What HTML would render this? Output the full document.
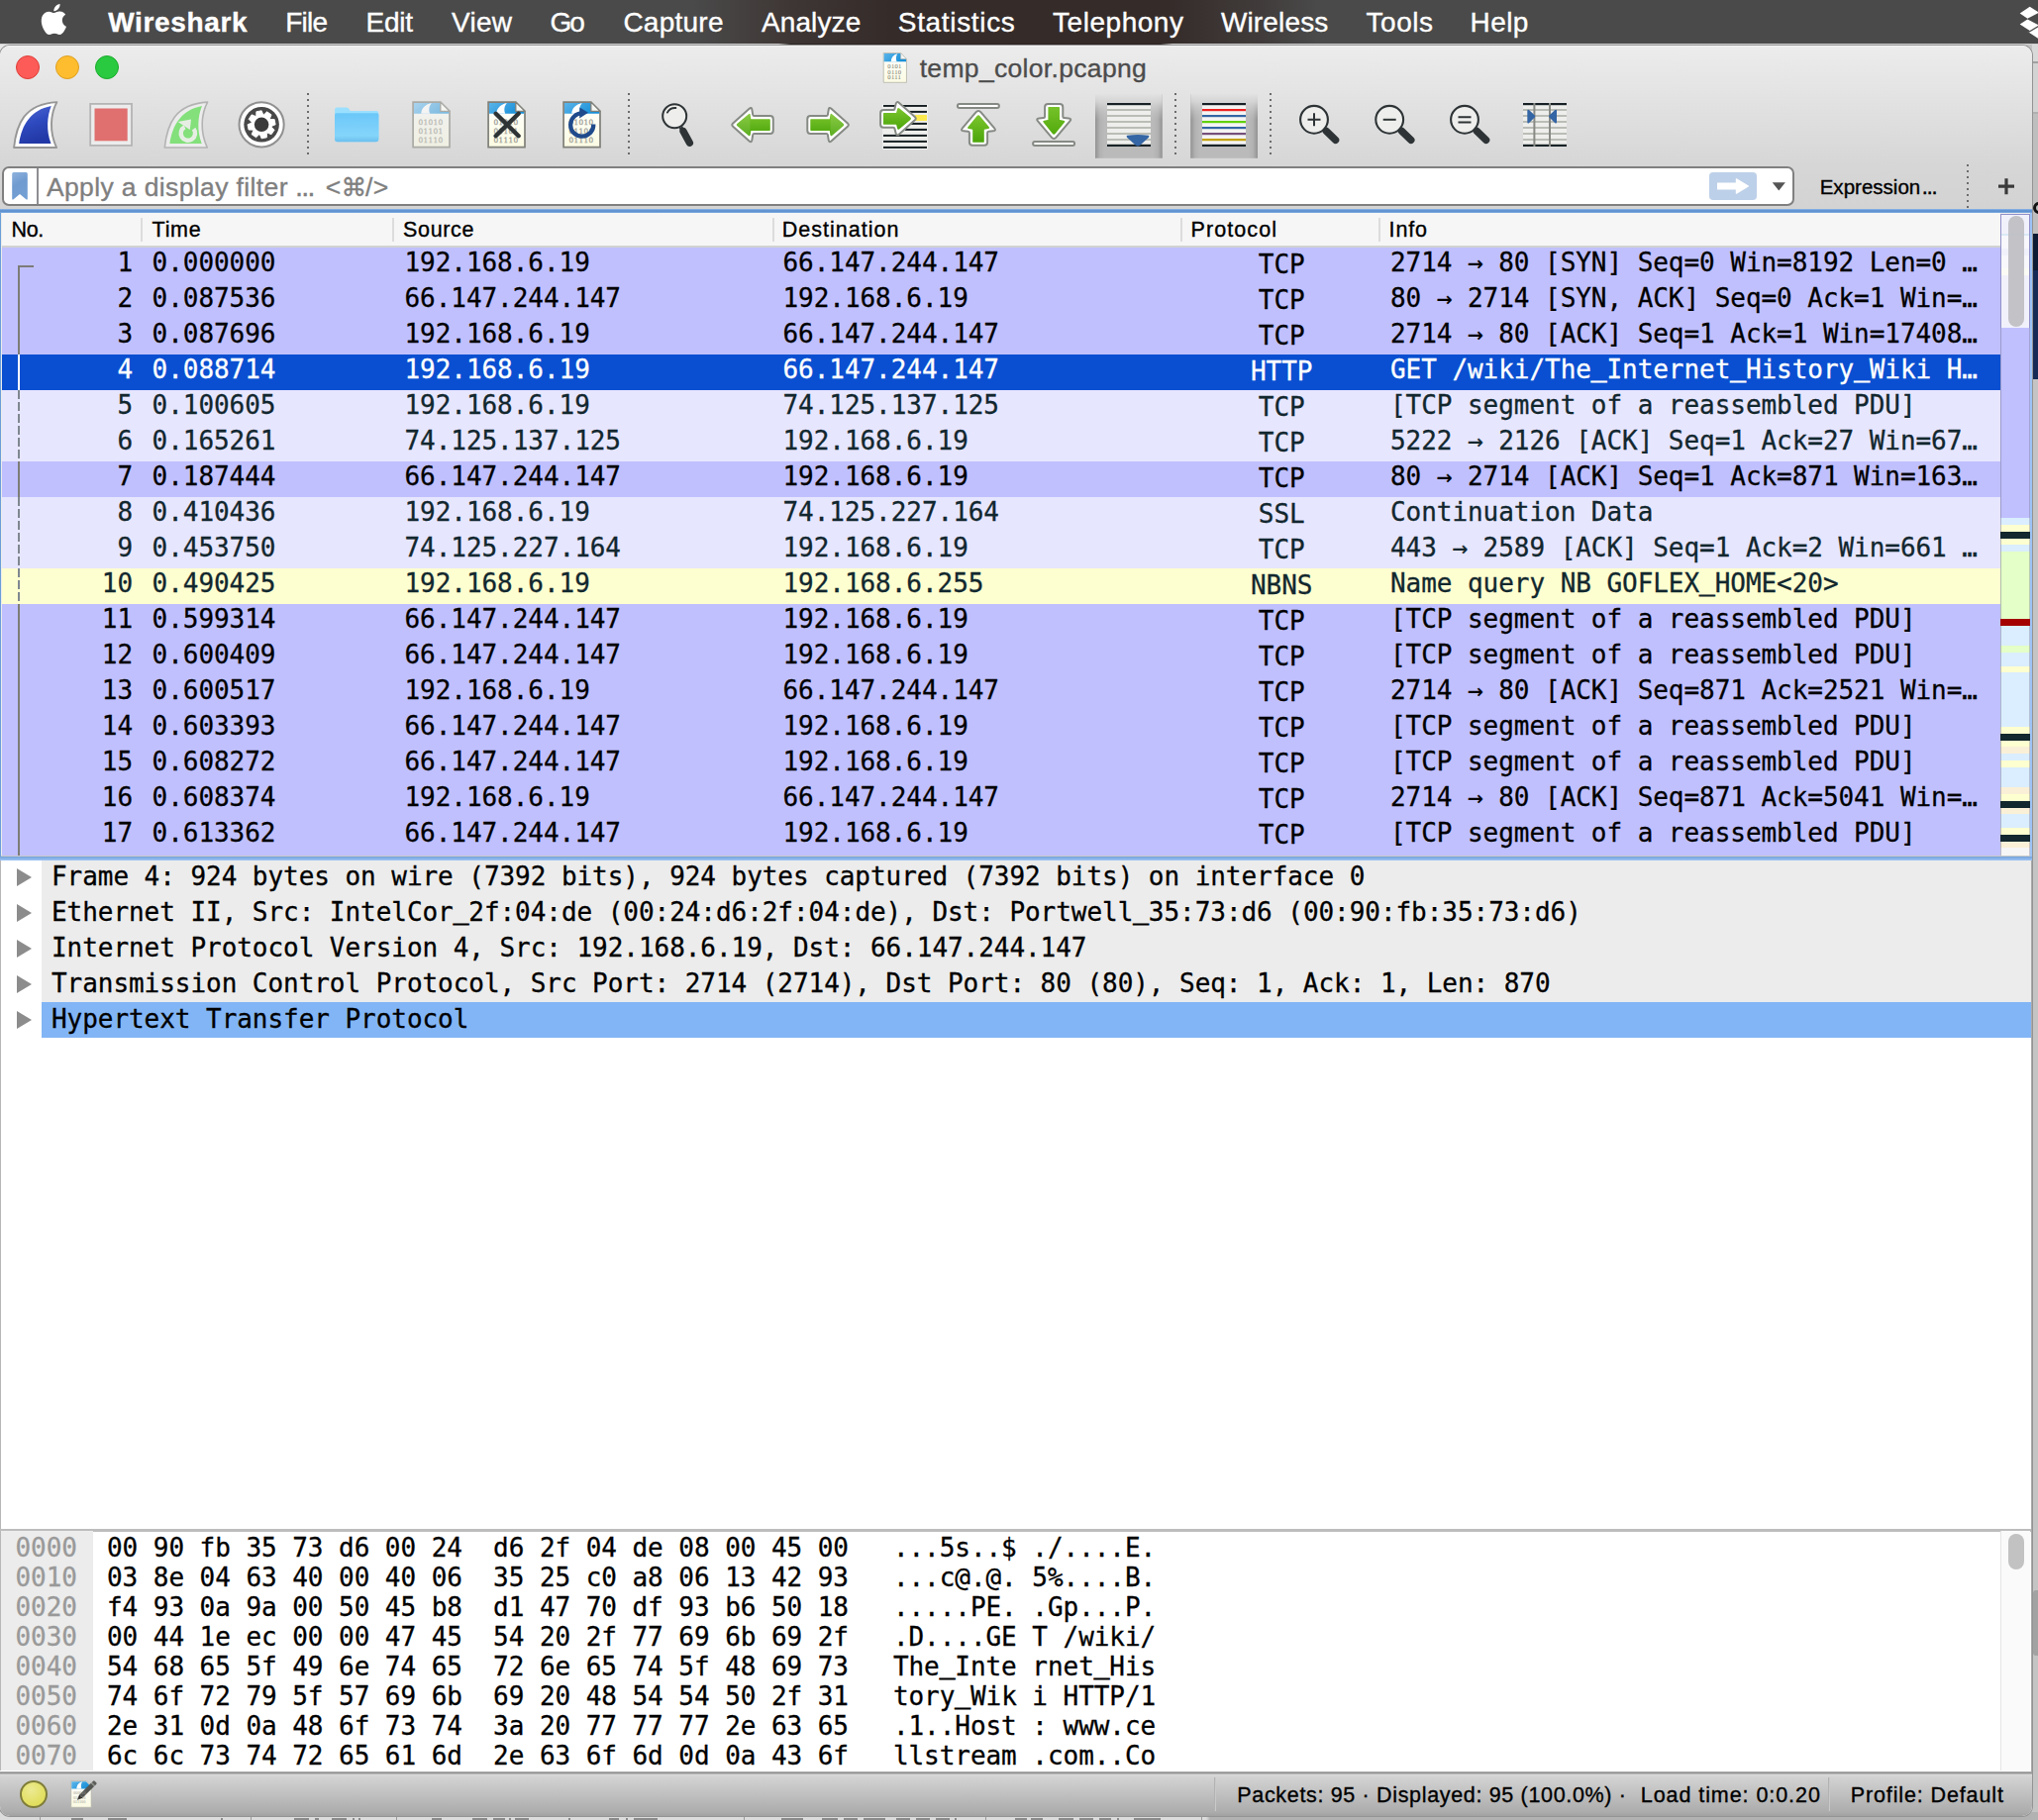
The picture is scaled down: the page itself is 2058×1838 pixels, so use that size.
<!DOCTYPE html>
<html lang="en"><head><meta charset="utf-8"><title>temp_color.pcapng</title>
<style>

html,body{margin:0;padding:0;}
body{width:2058px;height:1838px;overflow:hidden;position:relative;background:#c2c2c2;font-family:"Liberation Sans","DejaVu Sans",sans-serif;}
div,span{box-sizing:border-box;}
.a{position:absolute;}
.ov{position:absolute;left:0;top:0;pointer-events:none;z-index:3;}
.ov text{font-family:"Liberation Sans","DejaVu Sans",sans-serif;white-space:pre;stroke-width:0.35px;paint-order:stroke;}
.m{font-family:"DejaVu Sans Mono","Liberation Mono",monospace;font-size:26px;white-space:pre;letter-spacing:-0.05px;-webkit-text-stroke:0.3px currentColor;}
#menubar{left:0;top:0;width:2058px;height:43.5px;background:linear-gradient(90deg,#4a4a4a 0,#4a4a4a 700px,#3e3634 800px,#352c2a 900px,#352c2a 1180px,#403b3a 1270px,#4a4a4a 1330px,#4a4a4a 100%);}
#win{left:0;top:46px;width:2052px;height:1788px;border-radius:10px 10px 10px 10px;background:#fff;overflow:hidden;box-shadow:0 0 0 1px #949494;}
#tb{left:0;top:0;width:2052px;height:166px;background:linear-gradient(180deg,#f7f7f7 0,#ececec 1.5px,#d6d6d6 122px,#d3d3d3 166px);}
.row{position:absolute;left:2px;width:2018px;height:36px;}
.row span{position:absolute;top:-3px;line-height:36px;}
.p{background:#c0c0ff;color:#000;}
.l{background:#e7e6ff;color:#12272e;}
.y{background:#feffd0;color:#12272e;}
.s{background:#0a4fd1;color:#fff;}
.drow{position:absolute;left:42px;width:2009px;height:36px;background:#ececec;}
.drow span{position:absolute;left:10px;top:-1.3px;line-height:36px;color:#000;}
.tri{position:absolute;left:17px;width:0;height:0;border-left:15px solid #8c8c8c;border-top:9px solid transparent;border-bottom:9px solid transparent;}
.m i{font-style:normal;position:relative;top:-2.1px;-webkit-text-stroke:1px currentColor;}
.brow{position:absolute;left:0;height:30px;}
.brow span{position:absolute;top:1.1px;line-height:30px;}

</style></head>
<body>

<div class="a" style="left:2050px;top:44px;width:8px;height:1794px;background:#c4c4c4;"></div>
<div class="a" style="left:2052px;top:44px;width:6px;height:18px;background:#d9d9d9;"></div>
<div class="a" style="left:2052px;top:62px;width:6px;height:51px;background:#d3d3d3;border-top:2px solid #a0a0a0;"></div>
<div class="a" style="left:2052px;top:113px;width:6px;height:123px;background:#bebebe;border-top:2px solid #b0b0b0;"></div>
<div class="a" style="left:2053px;top:236px;width:5px;height:37px;background:#0c1a33;"></div>
<div class="a" style="left:2053px;top:273px;width:5px;height:110px;background:#152b55;"></div>
<div class="a" style="left:2053px;top:1606px;width:5px;height:66px;background:#a2a2a2;border-radius:3px 0 0 3px;"></div>
<div class="a" style="left:0;top:1830px;width:2058px;height:8px;background:linear-gradient(90deg,#dcdcdc 0,#dcdcdc 1218px,#b2b2b2 1222px,#b2b2b2 100%);"></div>
<div class="a" style="left:72px;top:1836px;width:12px;height:3px;background:#3a3a3a;opacity:0.5;"></div><div class="a" style="left:109px;top:1836px;width:19px;height:3px;background:#3a3a3a;opacity:0.5;"></div><div class="a" style="left:223px;top:1836px;width:2px;height:3px;background:#3a3a3a;opacity:0.5;"></div><div class="a" style="left:297px;top:1836px;width:15px;height:3px;background:#3a3a3a;opacity:0.5;"></div><div class="a" style="left:318px;top:1836px;width:4px;height:3px;background:#3a3a3a;opacity:0.5;"></div><div class="a" style="left:335px;top:1836px;width:15px;height:3px;background:#3a3a3a;opacity:0.5;"></div><div class="a" style="left:356px;top:1836px;width:2px;height:3px;background:#3a3a3a;opacity:0.5;"></div><div class="a" style="left:362px;top:1836px;width:2px;height:3px;background:#3a3a3a;opacity:0.5;"></div><div class="a" style="left:436px;top:1836px;width:10px;height:3px;background:#3a3a3a;opacity:0.5;"></div><div class="a" style="left:477px;top:1836px;width:15px;height:3px;background:#3a3a3a;opacity:0.5;"></div><div class="a" style="left:498px;top:1836px;width:12px;height:3px;background:#3a3a3a;opacity:0.5;"></div><div class="a" style="left:514px;top:1836px;width:2px;height:3px;background:#3a3a3a;opacity:0.5;"></div><div class="a" style="left:520px;top:1836px;width:14px;height:3px;background:#3a3a3a;opacity:0.5;"></div><div class="a" style="left:574px;top:1836px;width:2px;height:3px;background:#3a3a3a;opacity:0.5;"></div><div class="a" style="left:615px;top:1836px;width:10px;height:3px;background:#3a3a3a;opacity:0.5;"></div><div class="a" style="left:632px;top:1836px;width:2px;height:3px;background:#3a3a3a;opacity:0.5;"></div><div class="a" style="left:640px;top:1836px;width:24px;height:3px;background:#3a3a3a;opacity:0.5;"></div><div class="a" style="left:789px;top:1836px;width:22px;height:3px;background:#3a3a3a;opacity:0.5;"></div><div class="a" style="left:830px;top:1836px;width:16px;height:3px;background:#3a3a3a;opacity:0.5;"></div><div class="a" style="left:852px;top:1836px;width:14px;height:3px;background:#3a3a3a;opacity:0.5;"></div><div class="a" style="left:872px;top:1836px;width:22px;height:3px;background:#3a3a3a;opacity:0.5;"></div><div class="a" style="left:905px;top:1836px;width:14px;height:3px;background:#3a3a3a;opacity:0.5;"></div><div class="a" style="left:925px;top:1836px;width:14px;height:3px;background:#3a3a3a;opacity:0.5;"></div><div class="a" style="left:945px;top:1836px;width:14px;height:3px;background:#3a3a3a;opacity:0.5;"></div><div class="a" style="left:964px;top:1836px;width:2px;height:3px;background:#3a3a3a;opacity:0.5;"></div><div class="a" style="left:1025px;top:1836px;width:12px;height:3px;background:#3a3a3a;opacity:0.5;"></div><div class="a" style="left:1041px;top:1836px;width:12px;height:3px;background:#3a3a3a;opacity:0.5;"></div><div class="a" style="left:1069px;top:1836px;width:15px;height:3px;background:#3a3a3a;opacity:0.5;"></div><div class="a" style="left:1090px;top:1836px;width:14px;height:3px;background:#3a3a3a;opacity:0.5;"></div><div class="a" style="left:1110px;top:1836px;width:12px;height:3px;background:#3a3a3a;opacity:0.5;"></div><div class="a" style="left:1128px;top:1836px;width:2px;height:3px;background:#3a3a3a;opacity:0.5;"></div><div class="a" style="left:1145px;top:1836px;width:27px;height:3px;background:#3a3a3a;opacity:0.5;"></div><div class="a" style="left:40px;top:1834px;width:1px;height:4px;background:#9a9a9a;"></div><div class="a" style="left:253px;top:1834px;width:1px;height:4px;background:#9a9a9a;"></div><div class="a" style="left:400px;top:1834px;width:1px;height:4px;background:#9a9a9a;"></div><div class="a" style="left:751px;top:1834px;width:1px;height:4px;background:#9a9a9a;"></div><div class="a" style="left:995px;top:1834px;width:1px;height:4px;background:#9a9a9a;"></div><div class="a" style="left:1213px;top:1834px;width:1px;height:4px;background:#9a9a9a;"></div><div class="a" style="left:0;top:44px;width:14px;height:14px;background:#e6e6e6;"></div>
<div class="a" style="left:2052.5px;top:203.8px;width:13px;height:12.4px;border:3px solid #111;border-radius:6.2px;"></div>
<div id="menubar" class="a"></div>
<div class="a" style="left:0;top:44px;width:2058px;height:1px;background:#cfcfcf;"></div>
<div class="a" style="left:786px;top:43.5px;width:398px;height:1.5px;background:linear-gradient(90deg,rgba(46,38,36,0) 0,#2e2624 12px,#2e2624 386px,rgba(46,38,36,0) 398px);"></div>
<div id="win" class="a"><div id="tb" class="a"></div></div>
<div class="a" style="left:2px;top:168px;width:1810px;height:40px;border:2px solid #808080;border-radius:7px;background:#fff;"></div>
<div class="a" style="left:37px;top:170px;width:2px;height:36px;background:#8e8e93;"></div>
<div class="a" style="left:1726px;top:174px;width:48px;height:28px;border-radius:4px;background:#bdd0e9;"></div>

<div class="a" style="left:0;top:211px;width:2052px;height:4px;background:linear-gradient(180deg,#9bbfee 0,#6a9bd6 25%,#5a8ecd 55%,#6a9bd6 80%,#8db6ea 100%);"></div>
<div class="a" style="left:0;top:215px;width:2052px;height:654px;background:#ececec;overflow:hidden;z-index:1;">
<div class="a" style="left:0;top:0;width:1px;height:654px;background:#6c9fd8;"></div>
<div class="a" style="left:2050px;top:0;width:2px;height:654px;background:#9dc3f5;"></div>
<div class="a" style="left:2px;top:0;width:2018px;height:33px;background:#f6f6f6;"></div>
<div class="a" style="left:2px;top:33px;width:2018px;height:2px;background:#d2d2d2;"></div>
<div class="a" style="left:141.9px;top:5px;width:2px;height:24px;background:#dcdcdc;"></div>
<div class="a" style="left:395.6px;top:5px;width:2px;height:24px;background:#dcdcdc;"></div>
<div class="a" style="left:779.7px;top:5px;width:2px;height:24px;background:#dcdcdc;"></div>
<div class="a" style="left:1192.2px;top:5px;width:2px;height:24px;background:#dcdcdc;"></div>
<div class="a" style="left:1391.8px;top:5px;width:2px;height:24px;background:#dcdcdc;"></div>
<div class="row p m" style="top:35px;"><span style="right:1886px;">1</span><span style="left:151.6px;">0.000000</span><span style="left:406.5px;">192.168.6.19</span><span style="left:788.5px;">66.147.244.147</span><span style="left:1192.2px;width:200px;text-align:center;top:-1px;">TCP</span><span style="left:1402px;">2714 → 80 [SYN] Seq=0 Win=8192 Len=0 …</span></div>
<div class="row p m" style="top:71px;"><span style="right:1886px;">2</span><span style="left:151.6px;">0.087536</span><span style="left:406.5px;">66.147.244.147</span><span style="left:788.5px;">192.168.6.19</span><span style="left:1192.2px;width:200px;text-align:center;top:-1px;">TCP</span><span style="left:1402px;">80 → 2714 [SYN, ACK] Seq=0 Ack=1 Win=…</span></div>
<div class="row p m" style="top:107px;"><span style="right:1886px;">3</span><span style="left:151.6px;">0.087696</span><span style="left:406.5px;">192.168.6.19</span><span style="left:788.5px;">66.147.244.147</span><span style="left:1192.2px;width:200px;text-align:center;top:-1px;">TCP</span><span style="left:1402px;">2714 → 80 [ACK] Seq=1 Ack=1 Win=17408…</span></div>
<div class="row s m" style="top:143px;"><span style="right:1886px;">4</span><span style="left:151.6px;">0.088714</span><span style="left:406.5px;">192.168.6.19</span><span style="left:788.5px;">66.147.244.147</span><span style="left:1192.2px;width:200px;text-align:center;top:-1px;">HTTP</span><span style="left:1402px;">GET /wiki/The<i>_</i>Internet<i>_</i>History<i>_</i>Wiki H…</span></div>
<div class="row l m" style="top:179px;"><span style="right:1886px;">5</span><span style="left:151.6px;">0.100605</span><span style="left:406.5px;">192.168.6.19</span><span style="left:788.5px;">74.125.137.125</span><span style="left:1192.2px;width:200px;text-align:center;top:-1px;">TCP</span><span style="left:1402px;">[TCP segment of a reassembled PDU]</span></div>
<div class="row l m" style="top:215px;"><span style="right:1886px;">6</span><span style="left:151.6px;">0.165261</span><span style="left:406.5px;">74.125.137.125</span><span style="left:788.5px;">192.168.6.19</span><span style="left:1192.2px;width:200px;text-align:center;top:-1px;">TCP</span><span style="left:1402px;">5222 → 2126 [ACK] Seq=1 Ack=27 Win=67…</span></div>
<div class="row p m" style="top:251px;"><span style="right:1886px;">7</span><span style="left:151.6px;">0.187444</span><span style="left:406.5px;">66.147.244.147</span><span style="left:788.5px;">192.168.6.19</span><span style="left:1192.2px;width:200px;text-align:center;top:-1px;">TCP</span><span style="left:1402px;">80 → 2714 [ACK] Seq=1 Ack=871 Win=163…</span></div>
<div class="row l m" style="top:287px;"><span style="right:1886px;">8</span><span style="left:151.6px;">0.410436</span><span style="left:406.5px;">192.168.6.19</span><span style="left:788.5px;">74.125.227.164</span><span style="left:1192.2px;width:200px;text-align:center;top:-1px;">SSL</span><span style="left:1402px;">Continuation Data</span></div>
<div class="row l m" style="top:323px;"><span style="right:1886px;">9</span><span style="left:151.6px;">0.453750</span><span style="left:406.5px;">74.125.227.164</span><span style="left:788.5px;">192.168.6.19</span><span style="left:1192.2px;width:200px;text-align:center;top:-1px;">TCP</span><span style="left:1402px;">443 → 2589 [ACK] Seq=1 Ack=2 Win=661 …</span></div>
<div class="row y m" style="top:359px;"><span style="right:1886px;">10</span><span style="left:151.6px;">0.490425</span><span style="left:406.5px;">192.168.6.19</span><span style="left:788.5px;">192.168.6.255</span><span style="left:1192.2px;width:200px;text-align:center;top:-1px;">NBNS</span><span style="left:1402px;">Name query NB GOFLEX<i>_</i>HOME&lt;20&gt;</span></div>
<div class="row p m" style="top:395px;"><span style="right:1886px;">11</span><span style="left:151.6px;">0.599314</span><span style="left:406.5px;">66.147.244.147</span><span style="left:788.5px;">192.168.6.19</span><span style="left:1192.2px;width:200px;text-align:center;top:-1px;">TCP</span><span style="left:1402px;">[TCP segment of a reassembled PDU]</span></div>
<div class="row p m" style="top:431px;"><span style="right:1886px;">12</span><span style="left:151.6px;">0.600409</span><span style="left:406.5px;">66.147.244.147</span><span style="left:788.5px;">192.168.6.19</span><span style="left:1192.2px;width:200px;text-align:center;top:-1px;">TCP</span><span style="left:1402px;">[TCP segment of a reassembled PDU]</span></div>
<div class="row p m" style="top:467px;"><span style="right:1886px;">13</span><span style="left:151.6px;">0.600517</span><span style="left:406.5px;">192.168.6.19</span><span style="left:788.5px;">66.147.244.147</span><span style="left:1192.2px;width:200px;text-align:center;top:-1px;">TCP</span><span style="left:1402px;">2714 → 80 [ACK] Seq=871 Ack=2521 Win=…</span></div>
<div class="row p m" style="top:503px;"><span style="right:1886px;">14</span><span style="left:151.6px;">0.603393</span><span style="left:406.5px;">66.147.244.147</span><span style="left:788.5px;">192.168.6.19</span><span style="left:1192.2px;width:200px;text-align:center;top:-1px;">TCP</span><span style="left:1402px;">[TCP segment of a reassembled PDU]</span></div>
<div class="row p m" style="top:539px;"><span style="right:1886px;">15</span><span style="left:151.6px;">0.608272</span><span style="left:406.5px;">66.147.244.147</span><span style="left:788.5px;">192.168.6.19</span><span style="left:1192.2px;width:200px;text-align:center;top:-1px;">TCP</span><span style="left:1402px;">[TCP segment of a reassembled PDU]</span></div>
<div class="row p m" style="top:575px;"><span style="right:1886px;">16</span><span style="left:151.6px;">0.608374</span><span style="left:406.5px;">192.168.6.19</span><span style="left:788.5px;">66.147.244.147</span><span style="left:1192.2px;width:200px;text-align:center;top:-1px;">TCP</span><span style="left:1402px;">2714 → 80 [ACK] Seq=871 Ack=5041 Win=…</span></div>
<div class="row p m" style="top:611px;"><span style="right:1886px;">17</span><span style="left:151.6px;">0.613362</span><span style="left:406.5px;">66.147.244.147</span><span style="left:788.5px;">192.168.6.19</span><span style="left:1192.2px;width:200px;text-align:center;top:-1px;">TCP</span><span style="left:1402px;">[TCP segment of a reassembled PDU]</span></div>
<div class="row p m" style="top:647px;"></div>
<div class="a" style="left:18px;top:53px;width:16px;height:2px;background:#7c7c78;"></div>
<div class="a" style="left:18px;top:53px;width:2px;height:90px;background:#7c7c78;"></div>
<div class="a" style="left:18px;top:143px;width:2px;height:36px;background:#fff;"></div>
<div class="a" style="left:18px;top:179px;width:2px;height:72px;background:repeating-linear-gradient(180deg,#7f8890 0,#7f8890 9.5px,transparent 9.5px,transparent 12px);"></div>
<div class="a" style="left:18px;top:251px;width:2px;height:36px;background:#7c7c78;"></div>
<div class="a" style="left:18px;top:287px;width:2px;height:108px;background:repeating-linear-gradient(180deg,#7f8890 0,#7f8890 9.5px,transparent 9.5px,transparent 12px);"></div>
<div class="a" style="left:18px;top:395px;width:2px;height:254px;background:#7c7c78;"></div>
<div class="a" style="left:1px;top:649px;width:2049px;height:1px;background:#c9c9c9;"></div>
<div class="a" style="left:0;top:650px;width:2052px;height:4px;background:linear-gradient(180deg,#76a3da 0,#86b2e8 50%,#9fc5f6 100%);"></div>
<div class="a" style="left:2020px;top:1px;width:30px;height:3px;background:#c0c0ff;"></div><div class="a" style="left:2020px;top:2.2px;width:30px;height:646.8px;background:linear-gradient(180deg,#c0c0ff 0.0px,#c0c0ff 6.8px,#c0c0ff 6.8px,#c0c0ff 13.6px,#c0c0ff 13.6px,#c0c0ff 20.4px,#e7e6ff 20.4px,#e7e6ff 27.2px,#e7e6ff 27.2px,#e7e6ff 34.0px,#c0c0ff 34.0px,#c0c0ff 40.8px,#e7e6ff 40.8px,#e7e6ff 47.6px,#e7e6ff 47.6px,#e7e6ff 54.4px,#feffd0 54.4px,#feffd0 61.2px,#c0c0ff 61.2px,#c0c0ff 68.0px,#c0c0ff 68.0px,#c0c0ff 74.8px,#c0c0ff 74.8px,#c0c0ff 81.6px,#c0c0ff 81.6px,#c0c0ff 88.4px,#c0c0ff 88.4px,#c0c0ff 95.2px,#c0c0ff 95.2px,#c0c0ff 102.0px,#c0c0ff 102.0px,#c0c0ff 108.8px,#c0c0ff 108.8px,#c0c0ff 115.6px,#c0c0ff 115.6px,#c0c0ff 122.4px,#c0c0ff 122.4px,#c0c0ff 129.2px,#c0c0ff 129.2px,#c0c0ff 136.0px,#c0c0ff 136.0px,#c0c0ff 142.8px,#c0c0ff 142.8px,#c0c0ff 149.6px,#c0c0ff 149.6px,#c0c0ff 156.4px,#c0c0ff 156.4px,#c0c0ff 163.2px,#c0c0ff 163.2px,#c0c0ff 170.0px,#c0c0ff 170.0px,#c0c0ff 176.8px,#c0c0ff 176.8px,#c0c0ff 183.6px,#c0c0ff 183.6px,#c0c0ff 190.4px,#c0c0ff 190.4px,#c0c0ff 197.2px,#c0c0ff 197.2px,#c0c0ff 204.0px,#c0c0ff 204.0px,#c0c0ff 210.8px,#c0c0ff 210.8px,#c0c0ff 217.6px,#c0c0ff 217.6px,#c0c0ff 224.4px,#c0c0ff 224.4px,#c0c0ff 231.2px,#c0c0ff 231.2px,#c0c0ff 238.0px,#c0c0ff 238.0px,#c0c0ff 244.8px,#c0c0ff 244.8px,#c0c0ff 251.6px,#c0c0ff 251.6px,#c0c0ff 258.4px,#c0c0ff 258.4px,#c0c0ff 265.2px,#c0c0ff 265.2px,#c0c0ff 272.0px,#c0c0ff 272.0px,#c0c0ff 278.8px,#c0c0ff 278.8px,#c0c0ff 285.6px,#c0c0ff 285.6px,#c0c0ff 292.4px,#c0c0ff 292.4px,#c0c0ff 299.2px,#c0c0ff 299.2px,#c0c0ff 306.0px,#daeeff 306.0px,#daeeff 312.8px,#feffd0 312.8px,#feffd0 319.6px,#12272e 319.6px,#12272e 326.4px,#feffd0 326.4px,#feffd0 333.2px,#daeeff 333.2px,#daeeff 340.0px,#e4ffc7 340.0px,#e4ffc7 346.8px,#e4ffc7 346.8px,#e4ffc7 353.6px,#e4ffc7 353.6px,#e4ffc7 360.4px,#e4ffc7 360.4px,#e4ffc7 367.2px,#e4ffc7 367.2px,#e4ffc7 374.0px,#e4ffc7 374.0px,#e4ffc7 380.8px,#e4ffc7 380.8px,#e4ffc7 387.6px,#e4ffc7 387.6px,#e4ffc7 394.4px,#e4ffc7 394.4px,#e4ffc7 401.2px,#e4ffc7 401.2px,#e4ffc7 408.0px,#a40000 408.0px,#a40000 414.8px,#daeeff 414.8px,#daeeff 421.6px,#daeeff 421.6px,#daeeff 428.4px,#daeeff 428.4px,#daeeff 435.2px,#e4ffc7 435.2px,#e4ffc7 442.0px,#daeeff 442.0px,#daeeff 448.8px,#daeeff 448.8px,#daeeff 455.6px,#feffd0 455.6px,#feffd0 462.4px,#daeeff 462.4px,#daeeff 469.2px,#daeeff 469.2px,#daeeff 476.0px,#daeeff 476.0px,#daeeff 482.8px,#daeeff 482.8px,#daeeff 489.6px,#daeeff 489.6px,#daeeff 496.4px,#daeeff 496.4px,#daeeff 503.2px,#daeeff 503.2px,#daeeff 510.0px,#daeeff 510.0px,#daeeff 516.8px,#feffd0 516.8px,#feffd0 523.6px,#12272e 523.6px,#12272e 530.4px,#feffd0 530.4px,#feffd0 537.2px,#faf0d7 537.2px,#faf0d7 544.0px,#daeeff 544.0px,#daeeff 550.8px,#feffd0 550.8px,#feffd0 557.6px,#daeeff 557.6px,#daeeff 564.4px,#daeeff 564.4px,#daeeff 571.2px,#daeeff 571.2px,#daeeff 578.0px,#faf0d7 578.0px,#faf0d7 584.8px,#feffd0 584.8px,#feffd0 591.6px,#12272e 591.6px,#12272e 598.4px,#faf0d7 598.4px,#faf0d7 605.2px,#daeeff 605.2px,#daeeff 612.0px,#daeeff 612.0px,#daeeff 618.8px,#feffd0 618.8px,#feffd0 625.6px,#12272e 625.6px,#12272e 632.4px,#faf0d7 632.4px,#faf0d7 639.2px,#f6f6f6 639.2px,#f6f6f6 646.0px);"></div>
<div class="a" style="left:2020px;top:1px;width:1px;height:648px;background:rgba(110,110,140,0.45);"></div>
<div class="a" style="left:2049px;top:1px;width:1px;height:648px;background:rgba(110,110,140,0.35);"></div>
<div class="a" style="left:2020px;top:321.8px;width:30px;height:6.8px;background:#12272e;"></div>
<div class="a" style="left:2020px;top:410.2px;width:30px;height:6.8px;background:#a40000;"></div>
<div class="a" style="left:2020px;top:525.8px;width:30px;height:6.8px;background:#12272e;"></div>
<div class="a" style="left:2020px;top:593.8px;width:30px;height:6.8px;background:#12272e;"></div>
<div class="a" style="left:2020px;top:627.8px;width:30px;height:6.8px;background:#12272e;"></div>
<div class="a" style="left:2020px;top:1px;width:30px;height:115px;background:rgba(250,250,252,0.84);border-left:1px solid #9090c8;border-top:1px solid #9090c8;border-right:1px solid #9090c8;"></div>
<div class="a" style="left:2021px;top:21px;width:28px;height:2px;background:#dbe9f6;"></div>
<div class="a" style="left:2028px;top:3px;width:16px;height:112px;border-radius:8px;background:rgba(190,190,194,0.92);"></div>
</div>

<div class="a" style="left:0;top:868px;width:2052px;height:676px;background:#fff;overflow:hidden;">
<div class="a" style="left:0;top:0;width:1px;height:676px;background:#b8b8b8;"></div>
<div class="a" style="left:2050.5px;top:0;width:1.5px;height:676px;background:#aaaaaa;"></div>
<div class="drow m" style="top:0px;"><span>Frame 4: 924 bytes on wire (7392 bits), 924 bytes captured (7392 bits) on interface 0</span></div><div class="tri" style="top:9px;"></div>
<div class="drow m" style="top:36px;"><span>Ethernet II, Src: IntelCor<i>_</i>2f:04:de (00:24:d6:2f:04:de), Dst: Portwell<i>_</i>35:73:d6 (00:90:fb:35:73:d6)</span></div><div class="tri" style="top:45px;"></div>
<div class="drow m" style="top:72px;"><span>Internet Protocol Version 4, Src: 192.168.6.19, Dst: 66.147.244.147</span></div><div class="tri" style="top:81px;"></div>
<div class="drow m" style="top:108px;"><span>Transmission Control Protocol, Src Port: 2714 (2714), Dst Port: 80 (80), Seq: 1, Ack: 1, Len: 870</span></div><div class="tri" style="top:117px;"></div>
<div class="drow m" style="top:144px;background:#82b5f5;"><span>Hypertext Transfer Protocol</span></div><div class="tri" style="top:153px;"></div>
</div>
<div class="a" style="left:0;top:1544px;width:2052px;height:245px;background:#fff;overflow:hidden;">
<div class="a" style="left:0;top:0;width:2052px;height:2.6px;background:#bdbdbd;"></div>
<div class="a" style="left:0;top:2px;width:1px;height:242px;background:#b8b8b8;"></div>
<div class="a" style="left:1px;top:2px;width:93px;height:242px;background:#ececec;"></div>
<div class="a" style="left:2050.5px;top:0;width:1.5px;height:245px;background:#aaaaaa;"></div>
<div class="a" style="left:2020px;top:2px;width:30px;height:242px;background:#fafafa;border-left:1px solid #e4e4e4;"></div>
<div class="a" style="left:2028px;top:5px;width:16px;height:36px;border-radius:8px;background:#c2c2c2;"></div>
<div class="brow m" style="top:3px;"><span style="left:15.5px;color:#999;">0000</span><span style="left:108px;color:#000;">00 90 fb 35 73 d6 00 24  d6 2f 04 de 08 00 45 00</span><span style="left:901.9px;color:#000;">...5s..$ ./....E.</span></div>
<div class="brow m" style="top:33px;"><span style="left:15.5px;color:#999;">0010</span><span style="left:108px;color:#000;">03 8e 04 63 40 00 40 06  35 25 c0 a8 06 13 42 93</span><span style="left:901.9px;color:#000;">...c@.@. 5%....B.</span></div>
<div class="brow m" style="top:63px;"><span style="left:15.5px;color:#999;">0020</span><span style="left:108px;color:#000;">f4 93 0a 9a 00 50 45 b8  d1 47 70 df 93 b6 50 18</span><span style="left:901.9px;color:#000;">.....PE. .Gp...P.</span></div>
<div class="brow m" style="top:93px;"><span style="left:15.5px;color:#999;">0030</span><span style="left:108px;color:#000;">00 44 1e ec 00 00 47 45  54 20 2f 77 69 6b 69 2f</span><span style="left:901.9px;color:#000;">.D....GE T /wiki/</span></div>
<div class="brow m" style="top:123px;"><span style="left:15.5px;color:#999;">0040</span><span style="left:108px;color:#000;">54 68 65 5f 49 6e 74 65  72 6e 65 74 5f 48 69 73</span><span style="left:901.9px;color:#000;">The<i>_</i>Inte rnet<i>_</i>His</span></div>
<div class="brow m" style="top:153px;"><span style="left:15.5px;color:#999;">0050</span><span style="left:108px;color:#000;">74 6f 72 79 5f 57 69 6b  69 20 48 54 54 50 2f 31</span><span style="left:901.9px;color:#000;">tory<i>_</i>Wik i HTTP/1</span></div>
<div class="brow m" style="top:183px;"><span style="left:15.5px;color:#999;">0060</span><span style="left:108px;color:#000;">2e 31 0d 0a 48 6f 73 74  3a 20 77 77 77 2e 63 65</span><span style="left:901.9px;color:#000;">.1..Host : www.ce</span></div>
<div class="brow m" style="top:213px;"><span style="left:15.5px;color:#999;">0070</span><span style="left:108px;color:#000;">6c 6c 73 74 72 65 61 6d  2e 63 6f 6d 0d 0a 43 6f</span><span style="left:901.9px;color:#000;">llstream .com..Co</span></div>
</div>
<div class="a" style="left:0;top:1789px;width:2052px;height:45px;border-radius:0 0 10px 10px;background:linear-gradient(180deg,#c6c6c6 0,#8e8e8e 1px,#9a9a9a 2px,#d8d8d8 3px,#d2d2d2 6px,#bfbfbf 24px,#acacac 41px,#a2a2a2 45px);overflow:hidden;">
<div class="a" style="left:1226px;top:6px;width:2px;height:34px;background:#c9c9c9;border-left:1px solid #b2b2b2;"></div>
<div class="a" style="left:1846px;top:6px;width:2px;height:34px;background:#c9c9c9;border-left:1px solid #b2b2b2;"></div>
<div class="a" style="left:19.8px;top:9.2px;width:28px;height:28px;border-radius:14px;background:radial-gradient(circle at 40% 32%,#ecea94 0,#e4e168 55%,#dcd84c 100%);border:2px solid #7f7d3a;"></div>
</div>

<svg class="ov" width="2058" height="1838" viewBox="0 0 2058 1838">
<defs>
<linearGradient id="gBlue" x1="0" y1="0" x2="0.3" y2="1"><stop offset="0" stop-color="#5068d2"/><stop offset="0.5" stop-color="#2f4bc0"/><stop offset="1" stop-color="#2238a6"/></linearGradient>
<linearGradient id="gGreen" x1="0" y1="0" x2="0" y2="1"><stop offset="0" stop-color="#7cc52e"/><stop offset="1" stop-color="#4ba50a"/></linearGradient>
<linearGradient id="gGreen2" x1="0" y1="0" x2="0" y2="1"><stop offset="0" stop-color="#76c22a"/><stop offset="1" stop-color="#52aa0c"/></linearGradient>
<linearGradient id="gFolder" x1="0" y1="0" x2="0" y2="1"><stop offset="0" stop-color="#6bc7f8"/><stop offset="0.78" stop-color="#84d5fb"/><stop offset="0.86" stop-color="#7ccdf5"/><stop offset="1" stop-color="#6abfee"/></linearGradient>
<linearGradient id="gDoc" x1="0" y1="0" x2="0" y2="1"><stop offset="0" stop-color="#ffffff"/><stop offset="1" stop-color="#fbfbe3"/></linearGradient>
<linearGradient id="gDocD" x1="0" y1="0" x2="0" y2="1"><stop offset="0" stop-color="#f2f2f2"/><stop offset="1" stop-color="#efefe2"/></linearGradient>
<linearGradient id="gBand" x1="0" y1="0" x2="1" y2="0.4"><stop offset="0" stop-color="#5ab4ea"/><stop offset="1" stop-color="#1a90d8"/></linearGradient>
<linearGradient id="gBandD" x1="0" y1="0" x2="1" y2="0.4"><stop offset="0" stop-color="#a9d3ee"/><stop offset="1" stop-color="#7fbbe0"/></linearGradient>
<linearGradient id="gPress" x1="0" y1="0" x2="1" y2="0"><stop offset="0" stop-color="#929292"/><stop offset="0.07" stop-color="#b2b2b2"/><stop offset="0.14" stop-color="#bababa"/><stop offset="0.86" stop-color="#bababa"/><stop offset="0.93" stop-color="#b2b2b2"/><stop offset="1" stop-color="#929292"/></linearGradient>
<linearGradient id="gPressV" x1="0" y1="0" x2="0" y2="1"><stop offset="0" stop-color="#e2e2e2" stop-opacity="1"/><stop offset="0.12" stop-color="#dadada" stop-opacity="0.85"/><stop offset="0.4" stop-color="#c4c4c4" stop-opacity="0"/><stop offset="1" stop-color="#c4c4c4" stop-opacity="0"/></linearGradient>
<linearGradient id="gBm" x1="0" y1="0" x2="0.3" y2="1"><stop offset="0" stop-color="#8fb2dd"/><stop offset="0.5" stop-color="#6f9bd0"/><stop offset="1" stop-color="#739fd3"/></linearGradient>
<g id="fin"><path d="M14.06,149.05 C16.5,126 24,105 57.4,103.1 C51,115 49.5,133 57.1,149.05 Z"/></g>
<g id="fin_in"><path d="M19.2,145.1 C22,126 31,111 51.8,107 C47.5,117 46.5,132 51.5,145.1 Z"/></g>
<g id="docshape"><path d="M0.8,0.8 H28.5 L37.7,10 V46.3 H0.8 Z"/></g>
<g id="mag"><circle cx="0" cy="0" r="13.9" fill="#eeeeec" stroke="#2e3436" stroke-width="2.1"/><path d="M12.3,11.6 L21.6,20.6" stroke="#2e3436" stroke-width="7.4" stroke-linecap="round"/></g>
</defs>
<g transform="translate(38.9,4.1) scale(1.29)" fill="#fff"><path d="M12.152 6.896c-.948 0-2.415-1.078-3.96-1.04-2.04.027-3.91 1.183-4.961 3.014-2.117 3.675-.546 9.103 1.519 12.09 1.013 1.454 2.208 3.09 3.792 3.039 1.52-.065 2.09-.987 3.935-.987 1.831 0 2.35.987 3.96.948 1.637-.026 2.676-1.48 3.676-2.948 1.156-1.688 1.636-3.325 1.662-3.415-.039-.013-3.182-1.221-3.22-4.857-.026-3.04 2.48-4.494 2.597-4.559-1.429-2.09-3.623-2.324-4.39-2.376-2-.156-3.675 1.09-4.61 1.09zM15.53 3.83c.843-1.012 1.4-2.427 1.245-3.83-1.207.052-2.662.805-3.532 1.818-.78.896-1.454 2.338-1.273 3.714 1.338.104 2.715-.688 3.559-1.701"/></g>
<g fill="#fff"><path d="M2039.7,13.5 L2049.7,6.8 L2059,12.6 L2047.4,18.7 Z"/><path d="M2039.7,24.5 L2047.4,19.4 L2059,25.4 L2049.7,31 Z"/><path d="M2047,31.6 Q2048.5,33 2050,32.2 L2059,26.8 L2059,39.5 Z"/></g>
<circle cx="28" cy="68" r="11.5" fill="#fc5b57" stroke="#df3d38" stroke-width="1"/>
<circle cx="68" cy="68" r="11.5" fill="#fdbd2e" stroke="#de9f1f" stroke-width="1"/>
<circle cx="108" cy="68" r="11.5" fill="#29c940" stroke="#1aab2c" stroke-width="1"/>
<g transform="translate(891.7,53) scale(0.63,0.655)"><use href="#docshape" fill="url(#gDoc)" stroke="#b9b9b0" stroke-width="1.4"/><path d="M1.5,1.5 H28.3 L37,10.3 V14 H1.5 Z" fill="url(#gBand)"/><path d="M13,14 C13,8 17,3.5 23,2 C20.5,6 20.5,10 22,14 Z" fill="#fff"/><path d="M28.5,0.8 V10 H37.7 Z" fill="#f4f4f4" stroke="#b9b9b0" stroke-width="1"/></g>
<text x="896.3" y="69.0" style="font-family:'Liberation Serif',serif;font-size:6.6px;letter-spacing:0.3px;fill:#77776e;">0101</text>
<text x="896.3" y="74.7" style="font-family:'Liberation Serif',serif;font-size:6.6px;letter-spacing:0.3px;fill:#77776e;">0110</text>
<text x="896.3" y="80.4" style="font-family:'Liberation Serif',serif;font-size:6.6px;letter-spacing:0.3px;fill:#77776e;">0111</text>
<path d="M12.2,175.5 Q12.2,174 13.7,174 H26.3 Q27.8,174 27.8,175.5 V200.5 Q27.8,202.3 26.3,201.3 L20,196 L13.7,201.3 Q12.2,202.3 12.2,200.5 Z" fill="url(#gBm)"/>
<path d="M1734.6,185 H1753.4 V180.8 L1765.4,188 L1753.4,195.2 V191 H1734.6 Z" fill="#fff" stroke="#fff" stroke-width="1.2" stroke-linejoin="round"/>
<path d="M1789.7,184.3 H1802.9 L1796.3,192.4 Z" fill="#555"/>
<path d="M2018,188.2 H2034 M2026,180.3 V196.2" stroke="#3a3a3a" stroke-width="3.2"/>
<line x1="311" y1="94" x2="311" y2="157" stroke="#6c6c6c" stroke-width="2" stroke-dasharray="2 4"/>
<line x1="635" y1="94" x2="635" y2="157" stroke="#6c6c6c" stroke-width="2" stroke-dasharray="2 4"/>
<line x1="1187" y1="94" x2="1187" y2="157" stroke="#6c6c6c" stroke-width="2" stroke-dasharray="2 4"/>
<line x1="1283" y1="94" x2="1283" y2="157" stroke="#6c6c6c" stroke-width="2" stroke-dasharray="2 4"/>
<line x1="1987" y1="166" x2="1987" y2="210" stroke="#6c6c6c" stroke-width="2" stroke-dasharray="2 4"/>
<use href="#fin" fill="#fff" stroke="#969696" stroke-width="1.9" stroke-linejoin="round"/><use href="#fin_in" fill="url(#gBlue)"/>
<rect x="91.2" y="104.9" width="41.8" height="42" fill="#ececec" stroke="#b4b4b4" stroke-width="1.8"/><rect x="95.5" y="109.5" width="33.2" height="32.8" fill="#e06f6f"/>
<g transform="translate(152.2,0)"><use href="#fin" fill="#ececec" stroke="#b3b3b3" stroke-width="1.6" stroke-linejoin="round"/><use href="#fin_in" fill="#83e07b"/></g>
<g fill="none" stroke="#e6eee4" stroke-width="4.4"><path d="M186.5,128.2 A7.2,7.2 0 1 0 195.6,130.2"/></g><path d="M179.6,122.9 L193,120.6 L191.8,131 Z" fill="#e6eee4"/>
<circle cx="264.1" cy="125.8" r="22.6" fill="#fff" stroke="#909090" stroke-width="2"/><circle cx="264.1" cy="125.8" r="17.8" fill="#484848"/>
<g transform="translate(264.1,125.8)" fill="#fff"><circle r="10.5"/><path d="M-3.6,-9.5 L-2.7,-13.8 H2.7 L3.6,-9.5 Z" stroke="#fff" stroke-width="0.8" stroke-linejoin="round" transform="rotate(-11)"/><path d="M-3.6,-9.5 L-2.7,-13.8 H2.7 L3.6,-9.5 Z" stroke="#fff" stroke-width="0.8" stroke-linejoin="round" transform="rotate(34)"/><path d="M-3.6,-9.5 L-2.7,-13.8 H2.7 L3.6,-9.5 Z" stroke="#fff" stroke-width="0.8" stroke-linejoin="round" transform="rotate(79)"/><path d="M-3.6,-9.5 L-2.7,-13.8 H2.7 L3.6,-9.5 Z" stroke="#fff" stroke-width="0.8" stroke-linejoin="round" transform="rotate(124)"/><path d="M-3.6,-9.5 L-2.7,-13.8 H2.7 L3.6,-9.5 Z" stroke="#fff" stroke-width="0.8" stroke-linejoin="round" transform="rotate(169)"/><path d="M-3.6,-9.5 L-2.7,-13.8 H2.7 L3.6,-9.5 Z" stroke="#fff" stroke-width="0.8" stroke-linejoin="round" transform="rotate(214)"/><path d="M-3.6,-9.5 L-2.7,-13.8 H2.7 L3.6,-9.5 Z" stroke="#fff" stroke-width="0.8" stroke-linejoin="round" transform="rotate(259)"/><path d="M-3.6,-9.5 L-2.7,-13.8 H2.7 L3.6,-9.5 Z" stroke="#fff" stroke-width="0.8" stroke-linejoin="round" transform="rotate(304)"/><circle r="7.3" fill="#3a3a3a"/></g>
<path d="M338,111 Q338,108.5 340.5,108.5 H349.8 Q351.6,108.5 352.5,110 L353.6,111.9 H380 Q382.4,111.9 382.4,114.3 V140.8 Q382.4,143.2 380,143.2 H340.4 Q338,143.2 338,140.8 Z" fill="#9bdffe"/><path d="M338,116 Q338,114.2 339.8,114.2 H380.6 Q382.4,114.2 382.4,116 V140.8 Q382.4,143.2 380,143.2 H340.4 Q338,143.2 338,140.8 Z" fill="url(#gFolder)"/>
<g transform="translate(416.3,102.3)"><use href="#docshape" fill="url(#gDocD)" stroke="#aaaaa6" stroke-width="1.7"/><path d="M1.7,1.7 H28.2 L36.9,10.4 V12.5 H1.7 Z" fill="url(#gBandD)"/><path d="M9,12.5 C9,7.5 13,3.2 19.5,1.7 C16.5,5.5 16.5,9.5 18,12.5 Z" fill="#f4f4f4"/><path d="M28.5,0.8 V10 H37.7 Z" fill="#f6f6f2" stroke="#aaaaa6" stroke-width="1.3" stroke-linejoin="round"/><text x="6.3" y="24.0" style="font-family:'DejaVu Serif','Liberation Serif',serif;font-size:7.3px;letter-spacing:0.35px;fill:#b9b9b3;stroke:#b9b9b3;stroke-width:0.25px;">01010</text><text x="6.3" y="33.1" style="font-family:'DejaVu Serif','Liberation Serif',serif;font-size:7.3px;letter-spacing:0.35px;fill:#b9b9b3;stroke:#b9b9b3;stroke-width:0.25px;">01101</text><text x="6.3" y="42.2" style="font-family:'DejaVu Serif','Liberation Serif',serif;font-size:7.3px;letter-spacing:0.35px;fill:#b9b9b3;stroke:#b9b9b3;stroke-width:0.25px;">01110</text></g>
<g transform="translate(492.3,102.3)"><use href="#docshape" fill="url(#gDoc)" stroke="#80807a" stroke-width="1.7"/><path d="M1.7,1.7 H28.2 L36.9,10.4 V12.5 H1.7 Z" fill="url(#gBand)"/><path d="M9,12.5 C9,7.5 13,3.2 19.5,1.7 C16.5,5.5 16.5,9.5 18,12.5 Z" fill="#fff"/><path d="M28.5,0.8 V10 H37.7 Z" fill="#f6f6f2" stroke="#80807a" stroke-width="1.3" stroke-linejoin="round"/><text x="6.3" y="24.0" style="font-family:'DejaVu Serif','Liberation Serif',serif;font-size:7.3px;letter-spacing:0.35px;fill:#9c9c94;stroke:#9c9c94;stroke-width:0.25px;">01010</text><text x="6.3" y="33.1" style="font-family:'DejaVu Serif','Liberation Serif',serif;font-size:7.3px;letter-spacing:0.35px;fill:#9c9c94;stroke:#9c9c94;stroke-width:0.25px;">01101</text><text x="6.3" y="42.2" style="font-family:'DejaVu Serif','Liberation Serif',serif;font-size:7.3px;letter-spacing:0.35px;fill:#9c9c94;stroke:#9c9c94;stroke-width:0.25px;">01110</text></g>
<g transform="translate(568.3,102.3)"><use href="#docshape" fill="url(#gDoc)" stroke="#80807a" stroke-width="1.7"/><path d="M1.7,1.7 H28.2 L36.9,10.4 V12.5 H1.7 Z" fill="url(#gBand)"/><path d="M9,12.5 C9,7.5 13,3.2 19.5,1.7 C16.5,5.5 16.5,9.5 18,12.5 Z" fill="#fff"/><path d="M28.5,0.8 V10 H37.7 Z" fill="#f6f6f2" stroke="#80807a" stroke-width="1.3" stroke-linejoin="round"/><text x="6.3" y="24.0" style="font-family:'DejaVu Serif','Liberation Serif',serif;font-size:7.3px;letter-spacing:0.35px;fill:#9c9c94;stroke:#9c9c94;stroke-width:0.25px;">01010</text><text x="6.3" y="33.1" style="font-family:'DejaVu Serif','Liberation Serif',serif;font-size:7.3px;letter-spacing:0.35px;fill:#9c9c94;stroke:#9c9c94;stroke-width:0.25px;">01101</text><text x="6.3" y="42.2" style="font-family:'DejaVu Serif','Liberation Serif',serif;font-size:7.3px;letter-spacing:0.35px;fill:#9c9c94;stroke:#9c9c94;stroke-width:0.25px;">01110</text></g>
<path d="M500.7,114.8 L523.6,137.2 M523.6,114.8 L500.7,137.2" stroke="#2e3436" stroke-width="4.4" stroke-linecap="round"/>
<path d="M599.3,125.5 A11.6,11.6 0 1 1 588.5,114.5" fill="none" stroke="#1f4a8c" stroke-width="4.2"/><path d="M585.4,108.6 L594,113.7 L585.2,119.6 Z" fill="#1f4a8c"/>
<circle cx="681.2" cy="117.3" r="12" fill="#eeeeec" stroke="#2e3436" stroke-width="2"/><path d="M687.5,128.5 L690,133" stroke="#2e3436" stroke-width="4" stroke-linecap="butt"/><path d="M690,132.6 L696.4,144.3" stroke="#2e3436" stroke-width="7.3" stroke-linecap="round"/><path d="M673.9,113.6 A8.8,8.8 0 0 1 682.4,109" fill="none" stroke="#2e3436" stroke-width="1.9" stroke-linecap="round"/>
<path d="M740.17,127.71 Q738.30,126.05 740.17,124.39 L756.66,109.70 Q758.90,107.70 759.37,110.66 L760.21,115.91 Q760.40,117.10 761.60,117.10 L777.60,117.10 Q780.80,117.10 780.80,120.30 L780.80,131.80 Q780.80,135.00 777.60,135.00 L761.60,135.00 Q760.40,135.00 760.21,136.19 L759.37,141.44 Q758.90,144.40 756.66,142.40 Z" fill="#fff" stroke="#868a84" stroke-width="2" stroke-linejoin="round"/><path d="M744.53,127.33 Q743.00,126.05 744.53,124.77 L755.71,115.41 Q757.40,114.00 757.72,116.18 L758.26,119.90 Q758.30,120.20 758.60,120.20 L777.20,120.20 Q777.80,120.20 777.80,120.80 L777.80,131.30 Q777.80,131.90 777.20,131.90 L758.60,131.90 Q758.30,131.90 758.26,132.20 L757.72,135.92 Q757.40,138.10 755.71,136.69 Z" fill="url(#gGreen)"/>
<path d="M744.53,127.33 Q743.00,126.05 744.53,124.77 L755.87,115.28 Q757.40,114.00 757.40,116.00 L757.40,136.10 Q757.40,138.10 755.87,136.82 Z" fill="#fff" opacity="0.10"/><path d="M855.93,127.71 Q857.80,126.05 855.93,124.39 L839.44,109.70 Q837.20,107.70 836.73,110.66 L835.89,115.91 Q835.70,117.10 834.50,117.10 L818.50,117.10 Q815.30,117.10 815.30,120.30 L815.30,131.80 Q815.30,135.00 818.50,135.00 L834.50,135.00 Q835.70,135.00 835.89,136.19 L836.73,141.44 Q837.20,144.40 839.44,142.40 Z" fill="#fff" stroke="#868a84" stroke-width="2" stroke-linejoin="round"/><path d="M851.57,127.33 Q853.10,126.05 851.57,124.77 L840.39,115.41 Q838.70,114.00 838.38,116.18 L837.84,119.90 Q837.80,120.20 837.50,120.20 L818.90,120.20 Q818.30,120.20 818.30,120.80 L818.30,131.30 Q818.30,131.90 818.90,131.90 L837.50,131.90 Q837.80,131.90 837.84,132.20 L838.38,135.92 Q838.70,138.10 840.39,136.69 Z" fill="url(#gGreen)"/>
<path d="M851.57,127.33 Q853.10,126.05 851.57,124.77 L840.23,115.28 Q838.70,114.00 838.70,116.00 L838.70,136.10 Q838.70,138.10 840.23,136.82 Z" fill="#fff" opacity="0.10"/>
<rect x="891.5" y="105" width="45" height="45.8" fill="#fbfbfb"/><rect x="892" y="108" width="44" height="41" fill="#eeeeec"/><rect x="924" y="116" width="12" height="6" fill="#fce94f"/><rect x="892" y="105.9" width="44" height="2" fill="#161e22"/><rect x="892" y="111.9" width="44" height="2" fill="#161e22"/><rect x="892" y="123.9" width="44" height="2" fill="#161e22"/><rect x="892" y="129.9" width="44" height="2" fill="#161e22"/><rect x="892" y="135.9" width="44" height="2" fill="#161e22"/><rect x="892" y="141.9" width="44" height="2" fill="#161e22"/><rect x="892" y="147.9" width="44" height="2" fill="#161e22"/><rect x="892" y="129" width="22" height="4.5" fill="#eeeeec"/>
<path d="M923.83,121.36 Q925.70,119.70 923.83,118.04 L908.02,104.02 Q905.40,101.70 904.60,105.11 L903.47,109.93 Q903.20,111.10 902.00,111.10 L892.30,111.10 Q889.10,111.10 889.10,114.30 L889.10,125.60 Q889.10,128.80 892.30,128.80 L902.00,128.80 Q903.20,128.80 903.49,129.96 L904.56,134.30 Q905.40,137.70 908.02,135.38 Z" fill="#fff" stroke="#868a84" stroke-width="2" stroke-linejoin="round"/><path d="M919.36,120.98 Q920.90,119.70 919.34,118.45 L908.31,109.58 Q906.60,108.20 906.05,110.33 L905.18,113.71 Q905.10,114.00 904.80,114.00 L892.60,114.00 Q892.00,114.00 892.00,114.60 L892.00,125.20 Q892.00,125.80 892.60,125.80 L904.80,125.80 Q905.10,125.80 905.18,126.09 L906.05,129.47 Q906.60,131.60 908.29,130.19 Z" fill="url(#gGreen)"/>
<rect x="966.9" y="104.9" width="42" height="4" rx="2" fill="#fff" stroke="#868a84" stroke-width="2"/><path d="M990.59,113.44 Q988.00,110.40 985.41,113.44 L971.87,129.34 Q969.60,132.00 973.09,132.30 L977.70,132.70 Q978.90,132.80 978.90,134.00 L978.90,143.60 Q978.90,146.80 982.10,146.80 L993.90,146.80 Q997.10,146.80 997.10,143.60 L997.10,134.00 Q997.10,132.80 998.30,132.70 L1002.91,132.30 Q1006.40,132.00 1004.13,129.34 Z" fill="#fff" stroke="#868a84" stroke-width="2" stroke-linejoin="round"/><path d="M989.59,117.13 Q988.00,115.20 986.42,117.14 L977.59,127.99 Q976.20,129.70 978.36,130.10 L981.90,130.75 Q982.20,130.80 982.20,131.10 L982.20,143.20 Q982.20,143.80 982.80,143.80 L993.20,143.80 Q993.80,143.80 993.80,143.20 L993.80,131.10 Q993.80,130.80 994.10,130.75 L997.83,130.08 Q1000.00,129.70 998.60,128.01 Z" fill="url(#gGreen)"/>
<rect x="1043.1" y="142.9" width="42" height="4" rx="2" fill="#fff" stroke="#868a84" stroke-width="2"/><path d="M1066.79,138.36 Q1064.20,141.40 1061.61,138.36 L1048.07,122.46 Q1045.80,119.80 1049.29,119.50 L1053.90,119.10 Q1055.10,119.00 1055.10,117.80 L1055.10,108.20 Q1055.10,105.00 1058.30,105.00 L1070.10,105.00 Q1073.30,105.00 1073.30,108.20 L1073.30,117.80 Q1073.30,119.00 1074.50,119.10 L1079.11,119.50 Q1082.60,119.80 1080.33,122.46 Z" fill="#fff" stroke="#868a84" stroke-width="2" stroke-linejoin="round"/><path d="M1065.79,134.67 Q1064.20,136.60 1062.62,134.66 L1053.79,123.81 Q1052.40,122.10 1054.56,121.70 L1058.10,121.05 Q1058.40,121.00 1058.40,120.70 L1058.40,108.60 Q1058.40,108.00 1059.00,108.00 L1069.40,108.00 Q1070.00,108.00 1070.00,108.60 L1070.00,120.70 Q1070.00,121.00 1070.30,121.05 L1074.03,121.72 Q1076.20,122.10 1074.80,123.79 Z" fill="url(#gGreen2)"/>
<rect x="1106" y="95" width="67.8" height="64.8" fill="url(#gPress)"/><rect x="1106" y="95" width="67.8" height="64.8" fill="url(#gPressV)"/><rect x="1118" y="104" width="44" height="44" fill="#eeeeec"/><rect x="1118" y="110" width="44" height="2" fill="#babdb6"/><rect x="1118" y="116" width="44" height="2" fill="#babdb6"/><rect x="1118" y="122" width="44" height="2" fill="#babdb6"/><rect x="1118" y="128" width="44" height="2" fill="#babdb6"/><rect x="1118" y="134" width="44" height="2" fill="#babdb6"/><rect x="1118" y="140" width="44" height="2" fill="#babdb6"/><rect x="1118" y="104" width="44" height="2.2" fill="#182226"/><rect x="1118" y="145.8" width="44" height="2.2" fill="#182226"/><path d="M1138.2,136.8 Q1149,135.2 1159.8,136.8 Q1161,137.3 1160,138.8 L1151.5,146.5 Q1149,148.3 1146.5,146.5 L1138,138.8 Q1137,137.3 1138.2,136.8 Z" fill="#3465a4"/>
<rect x="1202.2" y="95" width="67.8" height="64.8" fill="url(#gPress)"/><rect x="1202.2" y="95" width="67.8" height="64.8" fill="url(#gPressV)"/><rect x="1214" y="104" width="44" height="44" fill="#f4f4f3"/><rect x="1214" y="110" width="44" height="2.2" fill="#ee2222"/><rect x="1214" y="116" width="44" height="2.2" fill="#3465a4"/><rect x="1214" y="122" width="44" height="2.2" fill="#5fd000"/><rect x="1214" y="128" width="44" height="2.2" fill="#3465a4"/><rect x="1214" y="134" width="44" height="2.2" fill="#75507b"/><rect x="1214" y="140" width="44" height="2.2" fill="#c4a000"/><rect x="1214" y="104" width="44" height="2.2" fill="#182226"/><rect x="1214" y="145.8" width="44" height="2.2" fill="#182226"/>
<g transform="translate(1327,120.8)"><use href="#mag"/><path d="M-6.5,0 H6.5 M0,-6.5 V6.5" stroke="#2e3436" stroke-width="2"/></g><g transform="translate(1403.2,120.8)"><use href="#mag"/><path d="M-6.5,0 H6.5" stroke="#2e3436" stroke-width="2"/></g><g transform="translate(1479,120.8)"><use href="#mag"/><path d="M-6.5,-2.6 H6.5 M-6.5,2.6 H6.5" stroke="#2e3436" stroke-width="2"/></g>
<rect x="1538" y="104" width="44" height="44" fill="#eeeeec"/><rect x="1538" y="110" width="44" height="2" fill="#babdb6"/><rect x="1538" y="116" width="44" height="2" fill="#babdb6"/><rect x="1538" y="122" width="44" height="2" fill="#babdb6"/><rect x="1538" y="128" width="44" height="2" fill="#babdb6"/><rect x="1538" y="134" width="44" height="2" fill="#babdb6"/><rect x="1538" y="140" width="44" height="2" fill="#babdb6"/><rect x="1538" y="104" width="44" height="2.2" fill="#182226"/><rect x="1538" y="145.8" width="44" height="2.2" fill="#182226"/><rect x="1548.4" y="104" width="2" height="44" fill="#888a85"/><rect x="1564" y="104" width="2" height="44" fill="#888a85"/><path d="M1542.3,112 Q1542.3,110 1544,111 L1549.8,116.6 Q1550.6,117.6 1549.8,118.6 L1544,124.2 Q1542.3,125.2 1542.3,123.2 Z" fill="#3465a4"/><path d="M1572,112 Q1572,110 1570.3,111 L1564.5,116.6 Q1563.7,117.6 1564.5,118.6 L1570.3,124.2 Q1572,125.2 1572,123.2 Z" fill="#3465a4"/>
<g transform="translate(71.3,1798.2) scale(0.555,0.585)"><use href="#docshape" fill="url(#gDoc)" stroke="#b4b4ac" stroke-width="1.6"/><path d="M1.7,1.7 H28.2 L36.9,10.4 V14 H1.7 Z" fill="url(#gBand)"/><path d="M11,14 C11,8 15,3.2 21.5,1.7 C18.5,5.5 18.5,10 20,14 Z" fill="#fff"/></g><g transform="translate(78,1817.8) rotate(-44.7)"><path d="M0,0 L5.2,-2.3 V2.3 Z" fill="#111"/><rect x="5.2" y="-2.3" width="16.6" height="4.6" fill="#555753"/><rect x="21.8" y="-2.3" width="1.2" height="4.6" fill="#8c8e89"/><path d="M23,-2.3 H24.8 Q26,-2.3 26,-1.1 V1.1 Q26,2.3 24.8,2.3 H23 Z" fill="#5c5e5a"/></g>
<text x="74" y="1812.0" style="font-family:'Liberation Serif',serif;font-size:4.2px;fill:#9a9a90;">000010</text><text x="74" y="1816.6" style="font-family:'Liberation Serif',serif;font-size:4.2px;fill:#9a9a90;">010110</text><text x="74" y="1821.2" style="font-family:'Liberation Serif',serif;font-size:4.2px;fill:#9a9a90;">011100</text>

<text x="109.20" y="32.00" style="font-size:28px;font-weight:bold;letter-spacing:0.645px;fill:#fff;stroke:#fff;">Wireshark</text>
<text x="288.30" y="32.00" style="font-size:28px;letter-spacing:-0.793px;fill:#fff;stroke:#fff;">File</text>
<text x="369.50" y="32.00" style="font-size:28px;letter-spacing:-0.267px;fill:#fff;stroke:#fff;">Edit</text>
<text x="456.00" y="32.00" style="font-size:28px;letter-spacing:0.267px;fill:#fff;stroke:#fff;">View</text>
<text x="555.60" y="32.00" style="font-size:28px;letter-spacing:-2.180px;fill:#fff;stroke:#fff;">Go</text>
<text x="629.40" y="32.00" style="font-size:28px;letter-spacing:0.253px;fill:#fff;stroke:#fff;">Capture</text>
<text x="768.90" y="32.00" style="font-size:28px;letter-spacing:0.137px;fill:#fff;stroke:#fff;">Analyze</text>
<text x="906.80" y="32.00" style="font-size:28px;letter-spacing:0.667px;fill:#fff;stroke:#fff;">Statistics</text>
<text x="1063.00" y="32.00" style="font-size:28px;letter-spacing:0.540px;fill:#fff;stroke:#fff;">Telephony</text>
<text x="1232.90" y="32.00" style="font-size:28px;letter-spacing:0.160px;fill:#fff;stroke:#fff;">Wireless</text>
<text x="1379.60" y="32.00" style="font-size:28px;letter-spacing:0.530px;fill:#fff;stroke:#fff;">Tools</text>
<text x="1484.50" y="32.00" style="font-size:28px;letter-spacing:0.453px;fill:#fff;stroke:#fff;">Help</text>
<text x="928.70" y="77.50" style="font-size:26.5px;letter-spacing:0.323px;fill:#4c4c4c;stroke:#4c4c4c;">temp_color.pcapng</text>
<text x="46.90" y="197.70" style="font-size:26.5px;letter-spacing:0.380px;fill:#7f7f7f;stroke:#7f7f7f;">Apply a display filter</text>
<text x="298.60" y="197.70" style="font-size:19.5px;font-weight:bold;letter-spacing:0.000px;fill:#7f7f7f;stroke:#7f7f7f;">…</text>
<text x="328.70" y="197.70" style="font-size:26.5px;letter-spacing:0.000px;fill:#7f7f7f;stroke:#7f7f7f;">&lt;</text>
<text x="344.6" y="197.9" style="font-size:25.5px;fill:#7f7f7f;stroke:#7f7f7f;font-family:'DejaVu Sans',sans-serif;">⌘</text>
<text x="368.90" y="197.70" style="font-size:26.5px;letter-spacing:0.510px;fill:#7f7f7f;stroke:#7f7f7f;">/&gt;</text>
<text x="1837.70" y="196.00" style="font-size:20.5px;letter-spacing:0.014px;fill:#000;stroke:#000;">Expression</text>
<text x="1941.00" y="196.00" style="font-size:15.4px;font-weight:bold;letter-spacing:0.000px;fill:#000;stroke:#000;">…</text>
<text x="11.40" y="238.70" style="font-size:21.5px;letter-spacing:-0.266px;fill:#000;stroke:#000;">No.</text>
<text x="153.60" y="238.70" style="font-size:21.5px;letter-spacing:0.707px;fill:#000;stroke:#000;">Time</text>
<text x="407.10" y="238.70" style="font-size:21.5px;letter-spacing:0.649px;fill:#000;stroke:#000;">Source</text>
<text x="789.80" y="238.70" style="font-size:21.5px;letter-spacing:1.009px;fill:#000;stroke:#000;">Destination</text>
<text x="1202.60" y="238.70" style="font-size:21.5px;letter-spacing:1.071px;fill:#000;stroke:#000;">Protocol</text>
<text x="1402.60" y="238.70" style="font-size:21.5px;letter-spacing:0.832px;fill:#000;stroke:#000;">Info</text>
<text x="1249.30" y="1820.20" style="font-size:21.5px;letter-spacing:0.665px;fill:#000;stroke:#000;">Packets: 95 · Displayed: 95 (100.0%) ·</text>
<text x="1656.80" y="1820.20" style="font-size:21.5px;letter-spacing:0.932px;fill:#000;stroke:#000;">Load time: 0:0.20</text>
<text x="1868.80" y="1820.20" style="font-size:21.5px;letter-spacing:0.871px;fill:#000;stroke:#000;">Profile: Default</text>

</svg>
</body></html>
